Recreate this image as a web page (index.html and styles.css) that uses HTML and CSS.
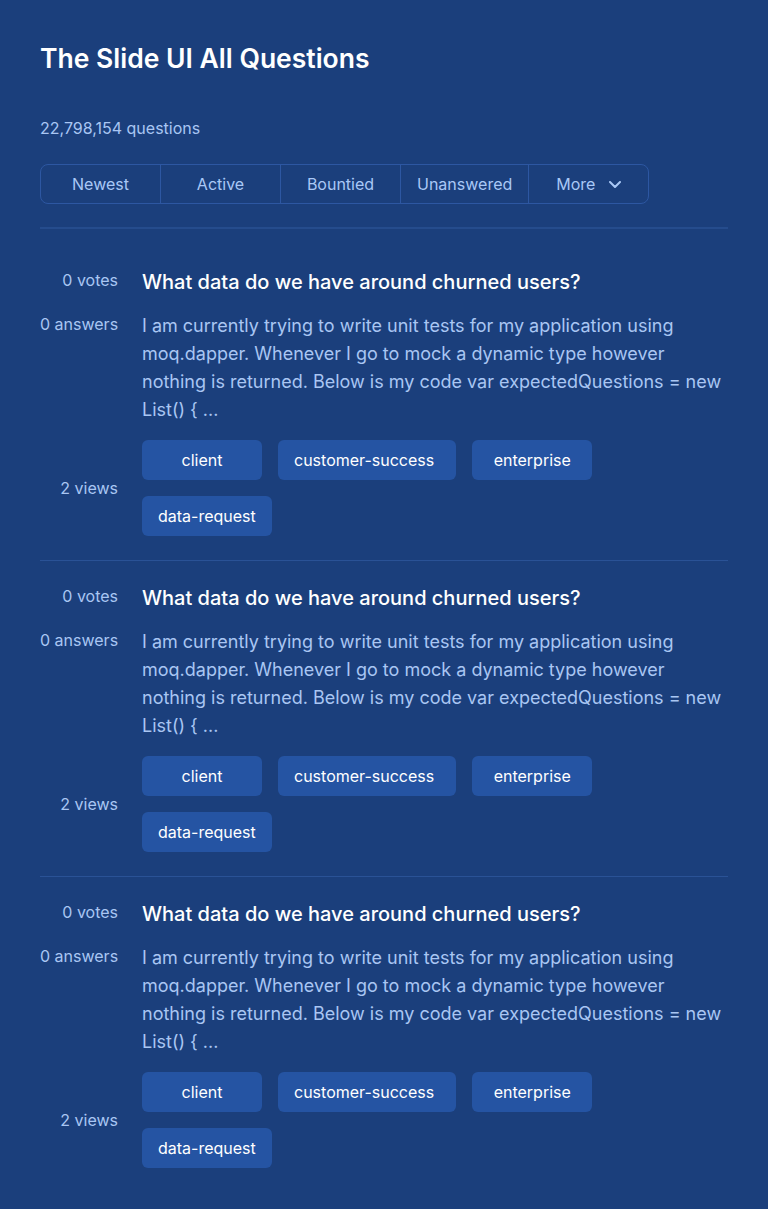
FILE: index.html
```html
<!DOCTYPE html>
<html lang="en">
<head>
<meta charset="utf-8">
<title>The Slide UI All Questions</title>
<link rel="stylesheet" href="styles.css">
</head>
<body>
<main class="page">
  <h1 class="page-title">The Slide UI All Questions</h1>
  <p class="count">22,798,154 questions</p>
  <nav class="tabs">
    <button class="tab">Newest</button>
    <button class="tab">Active</button>
    <button class="tab">Bountied</button>
    <button class="tab">Unanswered</button>
    <button class="tab tab-more">More
      <svg class="chev" width="12" height="7" viewBox="0 0 12 7" fill="none"><path d="M1 1l5 5 5-5" stroke="currentColor" stroke-width="2" stroke-linecap="round" stroke-linejoin="round"/></svg>
    </button>
  </nav>
  <hr class="divider">

  <section class="list">
    <article class="q">
      <div class="stat stat-votes">0 votes</div>
      <h2 class="q-title">What data do we have around churned users?</h2>
      <div class="stat stat-answers">0 answers</div>
      <p class="q-excerpt">I am currently trying to write unit tests for my application using moq.dapper. Whenever I go to mock a dynamic type however nothing is returned. Below is my code var expectedQuestions = new List() { ...</p>
      <div class="stat stat-views">2 views</div>
      <div class="tags">
        <span class="tag">client</span>
        <span class="tag tag-wide">customer-success</span>
        <span class="tag">enterprise</span>
        <span class="tag">data-request</span>
      </div>
    </article>
    <article class="q">
      <div class="stat stat-votes">0 votes</div>
      <h2 class="q-title">What data do we have around churned users?</h2>
      <div class="stat stat-answers">0 answers</div>
      <p class="q-excerpt">I am currently trying to write unit tests for my application using moq.dapper. Whenever I go to mock a dynamic type however nothing is returned. Below is my code var expectedQuestions = new List() { ...</p>
      <div class="stat stat-views">2 views</div>
      <div class="tags">
        <span class="tag">client</span>
        <span class="tag tag-wide">customer-success</span>
        <span class="tag">enterprise</span>
        <span class="tag">data-request</span>
      </div>
    </article>
    <article class="q">
      <div class="stat stat-votes">0 votes</div>
      <h2 class="q-title">What data do we have around churned users?</h2>
      <div class="stat stat-answers">0 answers</div>
      <p class="q-excerpt">I am currently trying to write unit tests for my application using moq.dapper. Whenever I go to mock a dynamic type however nothing is returned. Below is my code var expectedQuestions = new List() { ...</p>
      <div class="stat stat-views">2 views</div>
      <div class="tags">
        <span class="tag">client</span>
        <span class="tag tag-wide">customer-success</span>
        <span class="tag">enterprise</span>
        <span class="tag">data-request</span>
      </div>
    </article>
  </section>
</main>
</body>
</html>
```

FILE: styles.css
```css
* { box-sizing: border-box; }
html, body {
  margin: 0;
  background: #1b3f7c;
}
body {
  font-family: Inter, "Noto Sans", sans-serif;
  color: #a9c6f3;
}
.page {
  padding: 40px 40px 16px;
}
.page-title {
  margin: 0;
  font-size: 26.5px;
  line-height: 36px;
  font-weight: 600;
  color: #ffffff;
}
.count {
  margin: 42px 0 0;
  font-size: 16px;
  line-height: 20px;
  color: #a9c6f3;
}
.tabs {
  display: inline-flex;
  margin-top: 26px;
  border: 1px solid #2d57a2;
  border-radius: 8px;
  overflow: hidden;
}
.tab {
  display: flex;
  align-items: center;
  justify-content: center;
  gap: 14px;
  min-width: 120px;
  height: 38px;
  padding: 0 16px;
  background: transparent;
  border: 0;
  border-left: 1px solid #2d57a2;
  color: #a9c8f6;
  font-family: inherit;
  font-size: 16px;
}
.tab:first-child { border-left: 0; min-width: 119px; }
.chev { display: block; margin-top: 1px; }
.divider {
  margin: 23px 0 16px;
  border: 0;
  border-top: 2px solid #254c8d;
}
.q {
  display: grid;
  grid-template-columns: 78px 1fr;
  column-gap: 24px;
  row-gap: 16px;
  padding: 23px 0 24px;
  border-bottom: 1px solid #2a5296;
}
.q:last-child { border-bottom: 0; }
.stat {
  text-align: right;
  font-size: 16px;
  line-height: 24px;
  color: #a9c6f3;
  white-space: nowrap;
}
.stat-votes { align-self: start; }
.stat-answers { align-self: start; }
.stat-views { align-self: center; }
.q-title {
  margin: 0;
  font-size: 20px;
  line-height: 28px;
  font-weight: 500;
  color: #ffffff;
}
.q-excerpt {
  margin: 0;
  font-size: 18px;
  line-height: 28px;
  color: #a9c6f3;
}
.tags {
  display: flex;
  flex-wrap: wrap;
  gap: 16px;
}
.tag {
  display: flex;
  align-items: center;
  justify-content: center;
  min-width: 120px;
  height: 40px;
  padding: 0 16px;
  border-radius: 6px;
  background: #2554a3;
  color: #ffffff;
  font-size: 16px;
}
.tag-wide { padding-right: 22px; }
```
